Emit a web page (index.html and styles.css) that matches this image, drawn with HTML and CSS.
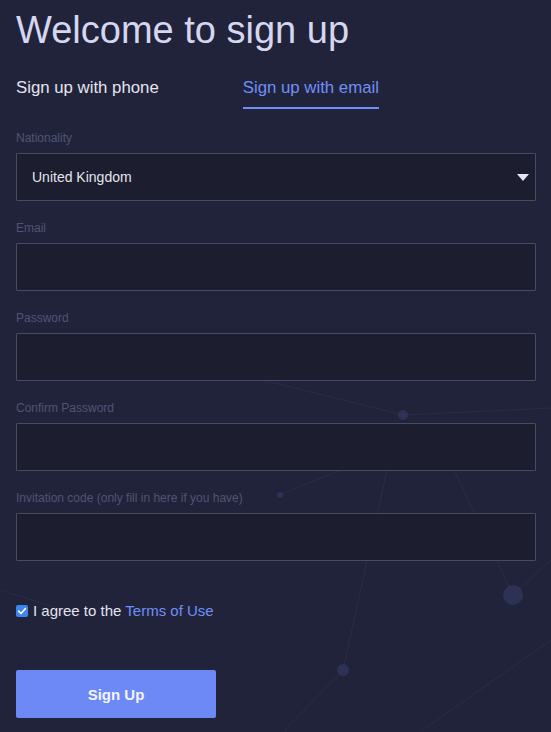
FILE: index.html
```html
<!DOCTYPE html>
<html lang="en">
<head>
  <meta charset="UTF-8" />
  <title>Sign up</title>
  <link rel="stylesheet" href="styles.css">
</head>
<body>
  <svg class="bg-net" width="551" height="732" viewBox="0 0 551 732">
    <g stroke="#3a3f66" stroke-width="1" fill="none" opacity="0.35">
      <line x1="262" y1="380" x2="403" y2="415" />
      <line x1="403" y1="415" x2="551" y2="408" />
      <line x1="387" y1="470" x2="343" y2="670" />
      <line x1="343" y1="670" x2="283" y2="732" />
      <line x1="455" y1="472" x2="513" y2="595" />
      <line x1="513" y1="595" x2="551" y2="560" />
      <line x1="280" y1="495" x2="340" y2="470" />
      <line x1="0" y1="590" x2="80" y2="615" />
      <line x1="420" y1="732" x2="551" y2="640" />
    </g>
    <g fill="#323761" opacity="0.7">
      <circle cx="403" cy="415" r="5" />
      <circle cx="513" cy="595" r="10" />
      <circle cx="343" cy="670" r="6" />
      <circle cx="280" cy="495" r="3" />
    </g>
  </svg>

  <div class="signup">
    <h1>Welcome to sign up</h1>

    <div class="tabs">
      <a class="tab">Sign up with phone</a>
      <a class="tab active">Sign up with email</a>
    </div>

    <form class="fields">
      <div class="field">
        <label>Nationality</label>
        <div class="select">
          <span>United Kingdom</span>
          <svg width="12" height="7" viewBox="0 0 12 7"><path d="M0 0 L12 0 L6 7 Z" fill="#e6e6f2" /></svg>
        </div>
      </div>

      <div class="field">
        <label>Email</label>
        <input type="text" />
      </div>

      <div class="field">
        <label>Password</label>
        <input type="password" />
      </div>

      <div class="field">
        <label>Confirm Password</label>
        <input type="password" />
      </div>

      <div class="field">
        <label>Invitation code (only fill in here if you have)</label>
        <input type="text" />
      </div>
    </form>

    <div class="agree">
      <span class="check">
        <svg width="12" height="12" viewBox="0 0 12 12"><path d="M2.6 6.2 L5 8.5 L9.4 3.6" stroke="#fff" stroke-width="1.6" fill="none" stroke-linecap="round" stroke-linejoin="round" /></svg>
      </span>
      <span>I agree to the <a class="link">Terms of Use</a></span>
    </div>

    <button class="submit" type="button">Sign Up</button>
  </div>
</body>
</html>
```

FILE: styles.css
```css
* {
  box-sizing: border-box;
}

body {
  margin: 0;
  font-family: 'Liberation Sans', Arial, sans-serif;
  background: #21233a;
  width: 551px;
  height: 732px;
  overflow: hidden;
  position: relative;
}

.bg-net {
  position: absolute;
  left: 0;
  top: 0;
}

.signup {
  position: relative;
  padding: 11px 15px 0 16px;
  display: flex;
  flex-direction: column;
}

h1 {
  margin: 0;
  font-size: 38px;
  line-height: 38px;
  font-weight: 400;
  color: #d5d7f0;
}

.tabs {
  display: flex;
  gap: 84px;
  margin-top: 27px;
}

.tab {
  font-size: 16.8px;
  line-height: 24px;
  color: #e4e5f0;
  padding-bottom: 7px;
  border-bottom: 2px solid transparent;
}

.tab.active {
  color: #6f8ff8;
  border-bottom-color: #6f8ff8;
}

.fields {
  display: flex;
  flex-direction: column;
  gap: 19px;
  margin: 21px 0 0;
}

.field {
  display: flex;
  flex-direction: column;
  gap: 7px;
}

label {
  font-size: 12px;
  line-height: 16px;
  color: #505473;
}

input,
.select {
  width: 100%;
  height: 48px;
  border: 1px solid #484a62;
  background: #1c1d2e;
  border-radius: 1px;
  outline: none;
  color: #e4e4ef;
  font-family: inherit;
  font-size: 14px;
  padding: 0 15px;
}

.select {
  display: flex;
  align-items: center;
  justify-content: space-between;
  padding-right: 6px;
}

.agree {
  display: flex;
  align-items: center;
  gap: 5px;
  margin-top: 40px;
  font-size: 15px;
  line-height: 20px;
  color: #e2e3ee;
}

.check {
  width: 12px;
  height: 12px;
  border-radius: 2px;
  background: #3c86ee;
  display: flex;
}

.link {
  color: #6f8ff8;
}

.submit {
  margin-top: 49px;
  width: 200px;
  height: 48px;
  border: none;
  border-radius: 2px;
  background: #6d89f6;
  color: #f2f4ff;
  font-family: inherit;
  font-weight: bold;
  font-size: 15px;
  cursor: pointer;
}
```
